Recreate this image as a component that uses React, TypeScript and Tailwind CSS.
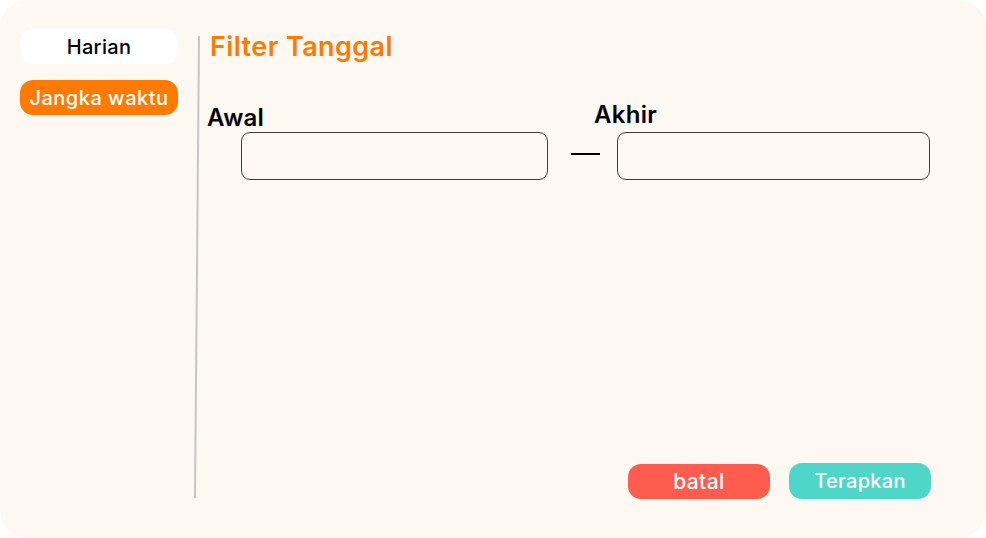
export default function App() {
  return (
    <div className="h-[538px] w-[986px] bg-white font-['Inter',sans-serif]">
      <div className="flex h-[538px] w-[986px] rounded-[28px] bg-[#fdf8f2]">
        <div className="ml-[20px] flex w-[158px] shrink-0 flex-col gap-[16px] pt-[29px]">
          <button className="h-[35px] rounded-[13px] bg-white text-[20px] font-medium tracking-[0.3px] text-black">
            Harian
          </button>
          <button className="h-[35px] rounded-[13px] bg-[#ff7a00] text-[20px] font-medium tracking-[0.5px] text-white">
            Jangka waktu
          </button>
        </div>

        <div className="ml-[18px] mt-[36px] h-[462px] w-[2px] shrink-0 rotate-[0.5deg] bg-[#c6c6c6]" />

        <div className="ml-[13px] flex min-w-0 flex-1 flex-col pb-[39px] pr-[55px] pt-[28px]">
          <h1 className="-ml-[1px] text-[27px] font-semibold leading-[38px] tracking-[0.4px] text-[#ff7a00]">Filter Tanggal</h1>

          <div className="mt-[34px] flex items-end">
            <div className="flex flex-col">
              <span className="-ml-[4px] mb-[-1px] text-[24px] font-semibold leading-[30px] tracking-[0.3px] text-black">Awal</span>
              <div className="ml-[30px] h-[48px] w-[307px] rounded-[9px] border border-[#3f3f3f]" />
            </div>
            <div className="ml-[23px] mr-[17px] mb-[25px] h-[2px] w-[29px] shrink-0 bg-black" />
            <div className="flex flex-col">
              <span className="-ml-[23px] mb-[2px] text-[24px] font-semibold leading-[30px] tracking-[0.3px] text-black">Akhir</span>
              <div className="h-[48px] w-[313px] rounded-[9px] border border-[#3f3f3f]" />
            </div>
          </div>

          <div className="mt-auto flex items-end justify-end gap-[19px]">
            <button className="h-[35px] w-[142px] rounded-[13px] bg-[#ff5c50] text-[21px] font-medium tracking-[0.4px] text-white">
              batal
            </button>
            <button className="h-[36px] w-[142px] rounded-[13px] bg-[#4fd6c8] text-[20px] font-medium tracking-[0.3px] text-white">
              Terapkan
            </button>
          </div>
        </div>
      </div>
    </div>
  );
}
